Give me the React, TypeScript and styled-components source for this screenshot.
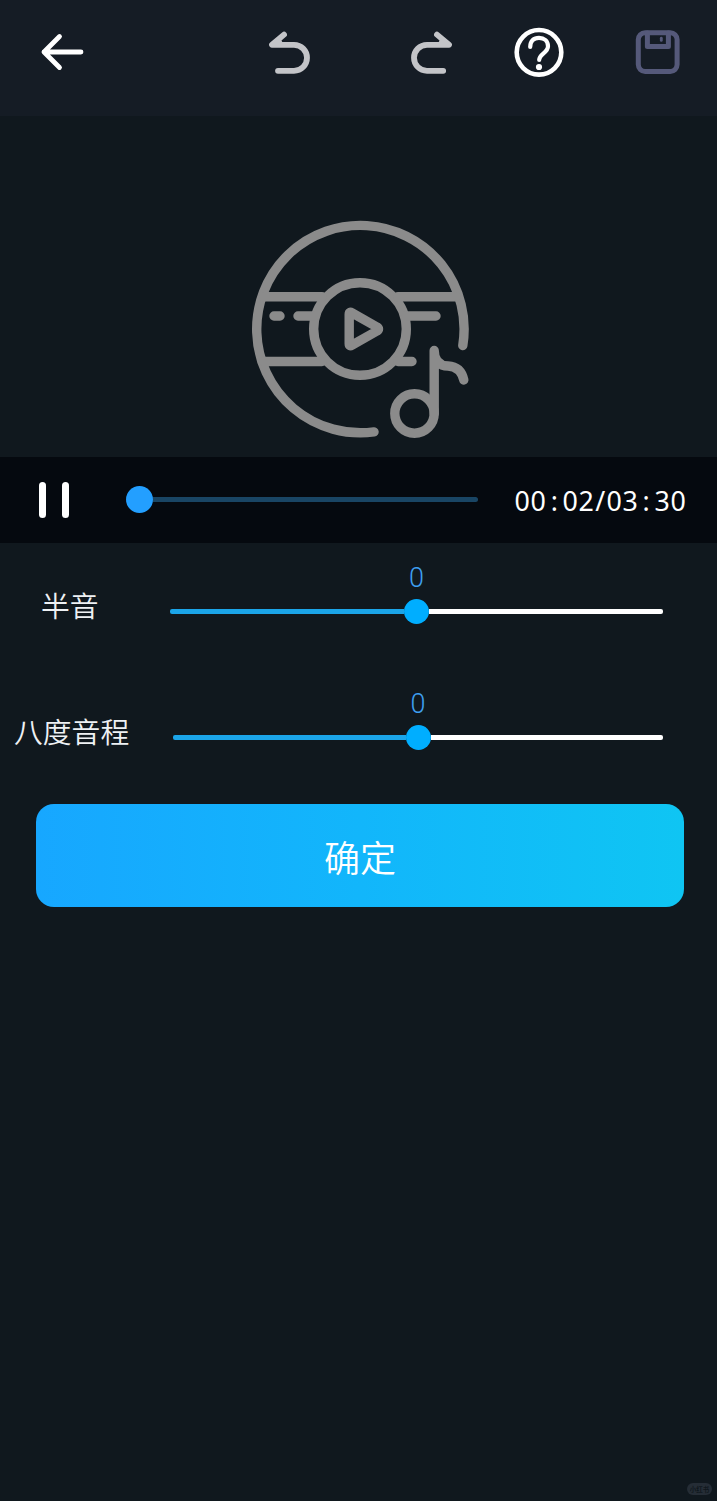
import React from 'react';
import styled, { createGlobalStyle } from 'styled-components';

const Global = createGlobalStyle`
  * { box-sizing: border-box; }
  body { margin: 0; background: #10181e; }
`;

const Screen = styled.main`
  display: flex;
  flex-direction: column;
  width: 717px;
  height: 1501px;
  background: #10181e;
  color: #fff;
  font-family: 'Noto Sans', 'Noto Sans CJK SC', sans-serif;
  overflow: hidden;
`;

const Header = styled.header`
  display: flex;
  align-items: flex-start;
  height: 116px;
  padding: 22px 30px 0 32px;
  background: #151c25;
`;

const IconButton = styled.button<{ $gap?: number }>`
  display: flex;
  flex: none;
  width: 60px;
  height: 60px;
  padding: 0;
  border: 0;
  background: none;
  margin-left: ${(p) => p.$gap ?? 0}px;
`;

const Cover = styled.section`
  display: flex;
  justify-content: center;
  height: 341px;
  padding: 104px 0 0 3px;
`;

const Player = styled.section`
  display: flex;
  align-items: center;
  height: 86px;
  padding: 0 30.5px 0 39px;
  background: #05090f;
`;

const Pause = styled.button`
  display: flex;
  justify-content: space-between;
  width: 30px;
  height: 36px;
  padding: 0;
  border: 0;
  background: none;
`;

const PauseBar = styled.span`
  width: 7px;
  height: 36px;
  border-radius: 4px;
  background: #fff;
`;

const Progress = styled.div`
  display: flex;
  align-items: center;
  width: 352px;
  margin: -2px 0 0 57px;
`;

const ProgressKnob = styled.span`
  width: 27px;
  height: 27px;
  border-radius: 50%;
  background: #239fff;
`;

const ProgressRest = styled.span`
  flex: 1;
  height: 5px;
  border-radius: 0 3px 3px 0;
  background: #194564;
`;

const Time = styled.div`
  display: flex;
  margin-left: auto;
  padding-top: 2px;
  font-size: 26.8px;
  line-height: 38px;
  letter-spacing: 0.66px;
`;

const Separator = styled.span<{ $width: number }>`
  width: ${(p) => p.$width}px;
  text-align: center;
`;

const Settings = styled.section`
  display: flex;
  flex-direction: column;
  height: 261px;
`;

const Row = styled.div<{ $indent: number }>`
  display: flex;
  height: 126px;
  padding: 18px 54px 0 ${(p) => p.$indent}px;
`;

const Label = styled.label<{ $width: number }>`
  flex: none;
  width: ${(p) => p.$width}px;
  padding-top: 23px;
  font-family: 'Noto Sans CJK SC', sans-serif;
  font-size: 28.8px;
  font-weight: 350;
  line-height: 42px;
  color: #eef1f4;
  white-space: nowrap;
`;

const Slider = styled.div`
  display: flex;
  flex: 1;
  flex-direction: column;
  align-items: center;
`;

const Value = styled.output`
  font-family: Roboto, sans-serif;
  font-size: 27px;
  font-weight: 350;
  line-height: 32px;
  height: 38px;
  padding-top: 1px;
  color: #3e9ff0;
`;

const Track = styled.div`
  display: flex;
  align-items: center;
  width: 100%;
  height: 25px;
`;

const TrackPart = styled.span<{ $filled?: boolean }>`
  flex: 1;
  height: 5px;
  background: ${(p) => (p.$filled ? '#1ba5e9' : '#fff')};
  border-radius: ${(p) => (p.$filled ? '2px 0 0 2px' : '0 2px 2px 0')};
`;

const Knob = styled.span`
  width: 25px;
  height: 25px;
  border-radius: 50%;
  background: #00aeff;
`;

const Confirm = styled.button`
  height: 103px;
  margin: 0 33px 0 36px;
  padding: 0;
  border: 0;
  border-radius: 18px;
  background: linear-gradient(90deg, #17a7ff, #12b6fb 50%, #0fc5f3);
  color: #fff;
  font-family: 'Noto Sans CJK SC', sans-serif;
  font-size: 36px;
  font-weight: 350;
`;

const Footer = styled.footer`
  display: flex;
  justify-content: flex-end;
  margin-top: auto;
  padding: 0 5px 6px 0;
`;

const Mark = styled.span`
  width: 25px;
  height: 12px;
  border-radius: 6px;
  background: #252d36;
  color: #10181e;
  font-family: 'Noto Sans CJK SC', sans-serif;
  font-size: 6.5px;
  font-weight: 700;
  line-height: 12px;
  text-align: center;
  white-space: nowrap;
`;

const stroke = (color: string, width: number) => ({
  fill: 'none',
  stroke: color,
  strokeWidth: width,
  strokeLinecap: 'round' as const,
  strokeLinejoin: 'round' as const,
});

const BackIcon = () => (
  <svg width="60" height="60" {...stroke('#fff', 4.8)}>
    <path d="M27.5 14.5L12 30L27.5 45.5M12 30H49" />
  </svg>
);

const UndoIcon = () => (
  <svg width="60" height="60" {...stroke('#c3c4c8', 5.8)}>
    <path d="M24 12.6L12 22.8H34A13 13 0 0 1 34 48.8H18" />
    <path d="M20 19L16 22.8H22Z" strokeWidth="3" />
  </svg>
);

const RedoIcon = () => (
  <svg width="60" height="60" {...stroke('#c3c4c8', 5.8)}>
    <path d="M36 12.6L48 22.8H26A13 13 0 0 0 26 48.8H42.2" />
    <path d="M40 19L44 22.8H38Z" strokeWidth="3" />
  </svg>
);

const HelpIcon = () => (
  <svg width="60" height="60" {...stroke('#fff', 4.6)}>
    <circle cx="30" cy="30.3" r="22.3" />
    <path d="M21.2 25C21.2 18.8 25 15.8 30 15.8S39 19 39 24.2C39 31 30.2 31.5 30.2 38" strokeWidth="4.2" />
    <circle cx="30" cy="45" r="3.1" fill="#fff" stroke="none" />
  </svg>
);

const SaveIcon = () => (
  <svg width="60" height="60" {...stroke('#55597a', 5)}>
    <rect x="11.3" y="10.8" width="38.8" height="38.6" rx="6.8" />
    <path d="M20.4 11V24.4H41.4V11" strokeWidth="5" />
    <path d="M34.3 16.2V18.4" strokeWidth="2.8" />
  </svg>
);

const DiscIcon = () => (
  <svg width="220" height="220" viewBox="250 220 220 220" {...stroke('#8b8b8b', 9.4)}>
    <path d="M462.8 345.5A103.7 103.7 0 1 0 374 431.9" />
    <circle cx="360" cy="329" r="46.3" />
    <path d="M264 296.8H322M398 296.8H456M264 361.5H322M398 361.5H412" />
    <path d="M274 316H280M298 316H315M406 316H436" />
    <path d="M349.2 314.2Q349.2 311.2 352 312.8L377 327Q380 329 377 331L352 345.2Q349.2 346.8 349.2 343.8Z" />
    <circle cx="414.5" cy="413.5" r="19.7" />
    <path d="M434.2 413.5V350.5C434.2 361 440 365.8 448 366C457 366.5 462 372 463.8 380" />
  </svg>
);

function SettingRow({ label, value, indent, labelWidth }: { label: string; value: number; indent: number; labelWidth: number }) {
  return (
    <Row $indent={indent}>
      <Label $width={labelWidth}>{label}</Label>
      <Slider>
        <Value>{value}</Value>
        <Track>
          <TrackPart $filled />
          <Knob />
          <TrackPart />
        </Track>
      </Slider>
    </Row>
  );
}

export default function App() {
  return (
    <Screen>
      <Global />
      <Header>
        <IconButton aria-label="返回"><BackIcon /></IconButton>
        <IconButton aria-label="撤销" $gap={168}><UndoIcon /></IconButton>
        <IconButton aria-label="重做" $gap={81}><RedoIcon /></IconButton>
        <IconButton aria-label="帮助" $gap={48}><HelpIcon /></IconButton>
        <IconButton aria-label="保存" $gap={58}><SaveIcon /></IconButton>
      </Header>
      <Cover>
        <DiscIcon />
      </Cover>
      <Player>
        <Pause aria-label="暂停">
          <PauseBar />
          <PauseBar />
        </Pause>
        <Progress>
          <ProgressKnob />
          <ProgressRest />
        </Progress>
        <Time>
          00<Separator $width={16}>:</Separator>02
          <Separator $width={12}>/</Separator>
          03<Separator $width={16}>:</Separator>30
        </Time>
      </Player>
      <Settings>
        <SettingRow label="半音" value={0} indent={41} labelWidth={129} />
        <SettingRow label="八度音程" value={0} indent={14} labelWidth={159} />
      </Settings>
      <Confirm>确定</Confirm>
      <Footer>
        <Mark>小红书</Mark>
      </Footer>
    </Screen>
  );
}
